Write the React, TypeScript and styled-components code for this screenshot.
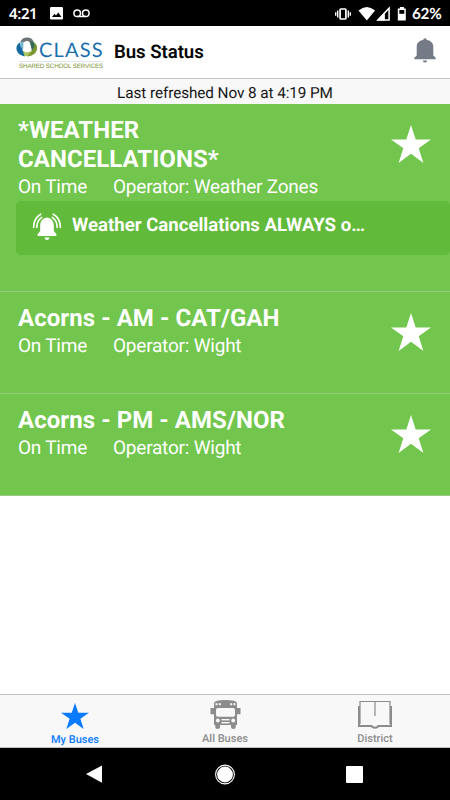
import React from "react";
import styled, { createGlobalStyle } from "styled-components";

const GlobalStyle = createGlobalStyle`
  * { box-sizing: border-box; }
  body {
    margin: 0;
    background: #fff;
    font-family: Roboto, "Liberation Sans", sans-serif;
    text-rendering: geometricPrecision;
  }
`;

const Screen = styled.div`
  width: 450px;
  height: 800px;
  display: flex;
  flex-direction: column;
  background: #fff;
  overflow: hidden;
`;

const StatusBar = styled.div`
  height: 26px;
  flex: none;
  background: #000;
  color: #fff;
  display: flex;
  align-items: center;
  padding: 1px 8px 0 9px;
  svg { display: block; flex: none; }
`;

const Clock = styled.span`
  width: 41px;
  font: 600 15px/26px "Noto Sans", sans-serif;
  letter-spacing: -0.4px;
  white-space: nowrap;
`;

const VoicemailSlot = styled.span`
  margin-left: 10px;
`;

const Battery = styled.span`
  margin-left: 6px;
  width: 30px;
  font: 700 15.3px/26px Lato, sans-serif;
  letter-spacing: -0.3px;
  white-space: nowrap;
`;

const StatusIcons = styled.div`
  margin-left: auto;
  display: flex;
  align-items: center;
`;

const Header = styled.header`
  height: 53px;
  flex: none;
  display: flex;
  align-items: center;
  border-bottom: 1px solid #c4c4c6;
  padding: 0 14px 0 16px;
  > svg { margin-bottom: 3px; }
`;

const Brand = styled.div`
  width: 88px;
  height: 33px;
  display: flex;
  flex-direction: column;
`;

const BrandTop = styled.div`
  display: flex;
  height: 25px;
  svg { display: block; flex: none; }
`;

const BrandName = styled.span`
  font: 400 20px/28px Lato, sans-serif;
  letter-spacing: 1.2px;
  color: #1b6fae;
  margin-left: 1px;
`;

const BrandTag = styled.span`
  border-top: 1px solid #e3e6e8;
  margin-left: 3px;
  width: 84px;
  font: 400 6.3px/9px "Liberation Sans", sans-serif;
  letter-spacing: -0.17px;
  color: #7e9436;
  white-space: nowrap;
`;

const PageTitle = styled.h1`
  margin: 0 auto 0 10px;
  font-size: 18.6px;
  font-weight: 600;
  line-height: 26px;
  letter-spacing: -0.04px;
  color: #050505;
`;

const Refreshed = styled.div`
  height: 25px;
  flex: none;
  background: #f8f8f8;
  color: #161616;
  text-align: center;
  font-size: 15.3px;
  line-height: 28px;
  letter-spacing: -0.08px;
`;

const List = styled.main`
  flex: 1;
`;

const BusRow = styled.section<{ $height: number }>`
  height: ${(p) => p.$height}px;
  background: #72c64d;
  border-bottom: 1px solid #96cb81;
  color: #fff;
  padding: 12px 0 0 16px;
`;

const RowTop = styled.div`
  display: flex;
  justify-content: space-between;
  padding: 0 19px 0 2px;
`;

const RowName = styled.h2`
  margin: 0 0 -1px;
  width: 290px;
  font-size: 24px;
  font-weight: 700;
  line-height: 29px;
  letter-spacing: 0.06px;
`;

const Meta = styled.div`
  display: flex;
  font-size: 19px;
  line-height: 27px;
  letter-spacing: -0.22px;
  span:first-child { width: 95px; }
`;

const StarSlot = styled.div`
  padding-top: 9px;
  svg { display: block; }
`;

const Alert = styled.div`
  height: 54px;
  margin-top: 1px;
  border-radius: 5px;
  background: #61ba39;
  display: flex;
  padding: 12px 16px 0;
  font-size: 18.6px;
  font-weight: 700;
  line-height: 25px;
  svg { display: block; margin-right: 10px; }
`;

const TabBar = styled.nav`
  height: 54px;
  flex: none;
  display: grid;
  grid-template-columns: repeat(3, 1fr);
  background: #f8f8f8;
  border-top: 1px solid #bfbfbf;
  border-bottom: 1px solid #bfbfbf;
`;

const Tab = styled.div<{ $active?: boolean }>`
  display: flex;
  flex-direction: column;
  align-items: center;
  padding-top: ${(p) => (p.$active ? 8 : 5)}px;
  color: ${(p) => (p.$active ? "#0a7aff" : "#8c8c8c")};
  font-size: 11px;
  font-weight: 500;
  line-height: 13px;
  svg { display: block; margin-bottom: ${(p) => (p.$active ? 4 : 3)}px; }
`;

const SystemNav = styled.div`
  height: 52px;
  flex: none;
  background: #000;
  display: flex;
  align-items: center;
  justify-content: space-between;
  padding: 0 87px 0 86px;
`;

const Star = ({ size, height }: { size: number; height: number }) => (
  <svg width={size} height={height} viewBox="0 0 40 38" preserveAspectRatio="none" fill="currentColor">
    <path d="M20 0 24.7 14.4H40L27.7 23.2 32.4 38 20 28.8 7.6 38 12.3 23.2 0 14.4H15.3Z" />
  </svg>
);

const PictureIcon = () => (
  <svg width="13" height="13" viewBox="0 0 13 13">
    <rect width="13" height="12.6" rx="1.3" fill="#fff" />
    <path d="M2 10 4.5 6.8 6 8.6 8.3 5.5 11.4 10Z" fill="#000" />
  </svg>
);

const VoicemailIcon = () => (
  <svg width="18" height="9" viewBox="0 0 18 9" fill="none" stroke="#fff" strokeWidth="1.5">
    <circle cx="4.2" cy="4.2" r="3.3" />
    <circle cx="12.8" cy="4.2" r="3.3" />
    <path d="M4.2 7.5H12.8" />
  </svg>
);

const SignalIcons = () => (
  <svg width="72" height="16" viewBox="334.5 5 72 16">
    <g fill="none" stroke="#fff">
      <rect x="340.6" y="8" width="5.8" height="10" rx="0.7" strokeWidth="1.7" />
      <path d="M338.2 9.4V16.6M336.2 11.3V14.7M348.8 9.4V16.6M350.8 11.3V14.7" strokeWidth="1.4" />
      <path d="M389.6 7.2V18.9H378.4Z" strokeWidth="1.5" />
    </g>
    <path d="M359 9.4Q367.3 2.4 375.6 9.4L367.3 19.5Z" fill="#fff" />
    <path d="M385.4 10.8V19.4H377.6Z" fill="#fff" />
    <path d="M400.4 6H404.4V7.5H406.3V19.6H398.3V7.5H400.4Z" fill="#fff" />
    <rect x="399.8" y="9" width="5" height="3.8" fill="#000" />
  </svg>
);

const BrandMark = () => (
  <svg width="22" height="22" viewBox="0 0 22 22">
    <path d="M4.4 6A7 6.4 0 0 1 17.7 6L14.7 6.4 11 4.8 7 6.6Z" fill="#6f7577" />
    <path d="M4.2 6.3C-1.8 9.5-.8 18.5 8.5 20.4L9.8 17.6 6.4 14.2V10.7L4 8.5Z" fill="#14699e" />
    <path d="M17.9 6.3C23.8 10 21.7 19.3 11.5 20.5L9.5 17.7 15.4 15.4 16.2 10.4Z" fill="#7a9630" />
    <path d="M4.3 6.1 7.5 5.7 7.2 13.8 4.3 10.4Z" fill="#78b5ce" />
    <path d="M13.5 5.2 18 6.2 18.6 10.3 16.1 14.7Z" fill="#356c55" />
    <path d="M6.7 14.4 10 16.4 15.2 15.2 11.6 20.2 8.5 20.1Z" fill="#aac663" />
  </svg>
);

const BellIcon = () => (
  <svg width="22" height="25" viewBox="0 0 22 25" fill="#747b87">
    <path d="M9.2 2A1.8 1.8 0 0 1 12.8 2C17 2.5 19.3 5 19.3 9V17.6L21.7 19.8V21.2H.3V19.8L2.7 17.6V9C2.7 5 5 2.5 9.2 2Z" />
    <path d="M8.8 22.4H13.2Q12.7 24.6 11 24.6T8.8 22.4Z" />
  </svg>
);

const RingingBell = () => (
  <svg width="30" height="28" viewBox="0 0 30 28">
    <path d="M15 4.5C9.8 5.2 8.2 9 8.2 13V18L5.5 21.2Q5 23 6.7 23H23.3Q25 23 24.5 21.2L21.8 18V13C21.8 9 20.2 5.2 15 4.5ZM12.4 24.4H17.6Q17 26.9 15 26.9T12.4 24.4Z" fill="#fff" />
    <path d="M4.8 14.4Q4.8 7.6 9.8 4.4M1.6 14.4Q1.6 5.2 8.7 1.2M25.2 14.4Q25.2 7.6 20.2 4.4M28.4 14.4Q28.4 5.2 21.3 1.2" fill="none" stroke="#fff" strokeWidth="1.6" strokeLinecap="round" />
  </svg>
);

const BusIcon = () => (
  <svg width="31" height="29" viewBox="0 0 31 29">
    <path d="M4 3Q4.5 0 15.5 0T27 3V8H30.5V14.3H27V25H25.7V27.2Q25.7 29 23.4 29T21 27.2V25H10V27.2Q10 29 7.6 29T5.3 27.2V25H4V14.3H.5V8H4Z" fill="#8c8c8c" />
    <g fill="#f8f8f8">
      <rect x="6" y="8" width="19" height="8.7" rx="1.8" />
      <rect x="5.5" y="3.2" width="2" height="2" />
      <rect x="8.8" y="3.2" width="2" height="2" />
      <rect x="20.2" y="3.2" width="2" height="2" />
      <rect x="23.5" y="3.2" width="2" height="2" />
      <circle cx="7.8" cy="20.5" r="1.9" />
      <circle cx="23.2" cy="20.5" r="1.9" />
      <rect x="11.5" y="19" width="8" height="1.4" />
      <rect x="11.5" y="22" width="8" height="1.4" />
    </g>
  </svg>
);

const BookIcon = () => (
  <svg width="34" height="29" viewBox="0 0 34 29" fill="none" stroke="#8c8c8c">
    <path d="M2 24V1.5H32V24M17 1.5V16" strokeWidth="1.2" />
    <path d="M1 6V26H13.5Q14.3 27.7 17 27.7T20.5 26H33V6" strokeWidth="2" />
  </svg>
);

const BackIcon = () => (
  <svg width="16" height="18" viewBox="0 0 16 18" fill="#fff"><path d="M16 .5V17.7L0 9Z" /></svg>
);

const HomeIcon = () => (
  <svg width="21" height="21" viewBox="0 0 21 21" fill="#fff">
    <circle cx="11" cy="10.5" r="7.9" />
    <circle cx="11" cy="10.5" r="9.4" fill="none" stroke="#fff" strokeWidth="1.1" />
  </svg>
);

const RecentIcon = () => (
  <svg width="17" height="17" viewBox="0 0 17 17"><rect width="17" height="17" rx="1" fill="#fff" /></svg>
);

const buses = [
  { name: "*WEATHER CANCELLATIONS*", operator: "Weather Zones", alert: "Weather Cancellations ALWAYS o…", height: 188 },
  { name: "Acorns - AM - CAT/GAH", operator: "Wight", height: 102 },
  { name: "Acorns - PM - AMS/NOR", operator: "Wight", height: 102 },
];

export default function App() {
  return (
    <Screen>
      <GlobalStyle />
      <StatusBar>
        <Clock>4:21</Clock>
        <PictureIcon />
        <VoicemailSlot><VoicemailIcon /></VoicemailSlot>
        <StatusIcons>
          <SignalIcons />
          <Battery>62%</Battery>
        </StatusIcons>
      </StatusBar>
      <Header>
        <Brand>
          <BrandTop>
            <BrandMark />
            <BrandName>CLASS</BrandName>
          </BrandTop>
          <BrandTag>SHARED SCHOOL SERVICES</BrandTag>
        </Brand>
        <PageTitle>Bus Status</PageTitle>
        <BellIcon />
      </Header>
      <Refreshed>Last refreshed Nov 8 at 4:19 PM</Refreshed>
      <List>
        {buses.map((bus) => (
          <BusRow key={bus.name} $height={bus.height}>
            <RowTop>
              <div>
                <RowName>{bus.name}</RowName>
                <Meta>
                  <span>On Time</span>
                  <span>Operator: {bus.operator}</span>
                </Meta>
              </div>
              <StarSlot><Star size={40} height={38} /></StarSlot>
            </RowTop>
            {bus.alert && <Alert><RingingBell />{bus.alert}</Alert>}
          </BusRow>
        ))}
      </List>
      <TabBar>
        <Tab $active><Star size={28} height={26} />My Buses</Tab>
        <Tab><BusIcon />All Buses</Tab>
        <Tab><BookIcon />District</Tab>
      </TabBar>
      <SystemNav>
        <BackIcon />
        <HomeIcon />
        <RecentIcon />
      </SystemNav>
    </Screen>
  );
}
